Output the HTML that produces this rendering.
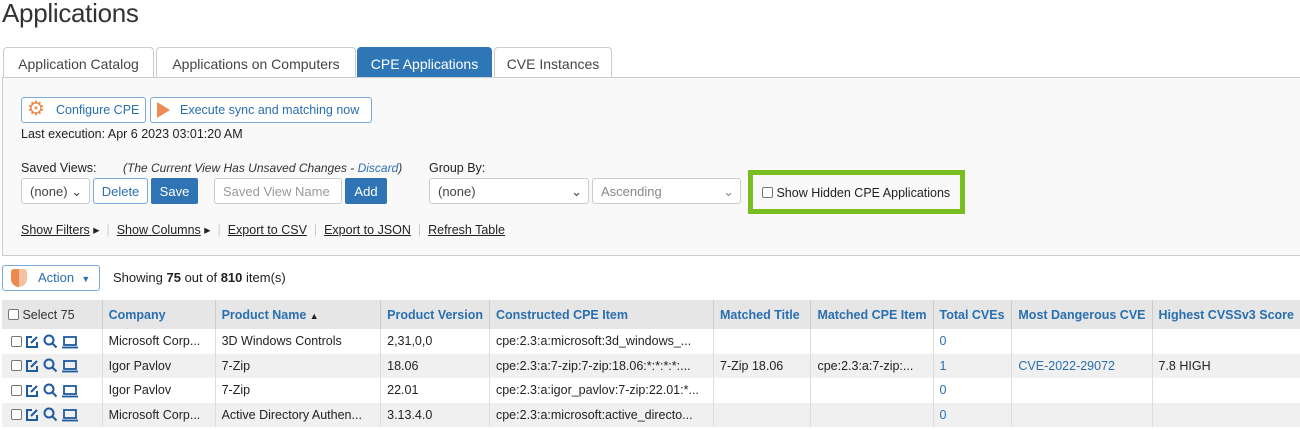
<!DOCTYPE html>
<html><head><style>
*{box-sizing:border-box}
body{margin:0;width:1300px;height:430px;overflow:hidden;background:#fff;font-family:"Liberation Sans",sans-serif;font-size:13px;color:#222;position:relative}
.a{position:absolute;white-space:nowrap}
.tab{position:absolute;top:47px;height:31px;border:1px solid #ccc;border-bottom:none;border-radius:4px 4px 0 0;background:#fff;font-size:14px;color:#444;padding-top:8px;text-align:center}
.btn{position:absolute;border:1px solid #7aa9d6;border-radius:3px;background:#fff;color:#2a6fb0;font-size:13px}
.bl{position:absolute;background:#2f74b5;color:#fff;border-radius:2px;font-size:13px;text-align:center}
.sel{position:absolute;border:1px solid #ccc;border-radius:3px;background:#fff;font-size:13px;color:#444;padding:5px 0 0 8px}
.lnk{text-decoration:underline;color:#222}
table{position:absolute;left:2px;top:300px;border-collapse:collapse;font-size:12.5px;table-layout:fixed}
td,th{height:24.5px;padding:0 6px;border-left:1px solid #ddd;white-space:nowrap;overflow:hidden;text-align:left}
th{height:29px;background:#e6e6e6;color:#2a6fb0;font-weight:bold;border-left:1px solid #ccc}
tr:nth-child(odd) td{background:#f0f0f0}
.b{color:#2a6fb0}
.cb{display:inline-block;width:11px;height:11px;border:1px solid #777;border-radius:2px;background:#fff;vertical-align:-1px}
svg{vertical-align:-3px}
</style></head><body>
<div class="a" style="left:2px;top:-2px;font-size:26px;color:#333;letter-spacing:-0.3px">Applications</div>
<div class="tab" style="left:3px;width:151px">Application Catalog</div>
<div class="tab" style="left:156px;width:200px">Applications on Computers</div>
<div class="tab" style="left:357px;width:135px;background:#2f76b7;border-color:#2f76b7;color:#fff">CPE Applications</div>
<div class="tab" style="left:494px;width:118px">CVE Instances</div>
<div class="a" style="left:2px;top:77px;width:1298px;height:179px;background:#f9f9f9;border-top:1px solid #ccc;border-left:1px solid #ccc;border-bottom:1px solid #ccc"></div>
<div class="btn" style="left:21px;top:97px;width:125px;height:26px;padding:5px 0 0 34px;font-size:12.5px">Configure CPE</div>
<div class="a" style="left:27px;top:99px;font-size:20px;color:#ec8a4e;line-height:20px">⚙</div>
<div class="btn" style="left:150px;top:97px;width:222px;height:26px;padding:5px 0 0 29px;font-size:12.5px">Execute sync and matching now</div>
<div class="a" style="left:157px;top:102px;width:0;height:0;border-left:13px solid #ef8c55;border-top:8px solid transparent;border-bottom:8px solid transparent"></div>
<div class="a" style="left:21px;top:127px;font-size:12.5px">Last execution: Apr 6 2023 03:01:20 AM</div>
<div class="a" style="left:21px;top:161px;font-size:12.5px">Saved Views:</div>
<div class="a" style="left:123px;top:161px;font-style:italic;color:#333;font-size:12px">(The Current View Has Unsaved Changes - <span class="b">Discard</span>)</div>
<div class="sel" style="left:21px;top:178px;width:69px;height:26px">(none) &#8964;</div>
<div class="btn" style="left:93px;top:178px;width:55px;height:26px;padding-top:5px;text-align:center">Delete</div>
<div class="bl" style="left:151px;top:178px;width:47px;height:26px;padding-top:6px">Save</div>
<div class="sel" style="left:214px;top:178px;width:128px;height:26px;color:#999">Saved View Name</div>
<div class="bl" style="left:345px;top:178px;width:42px;height:26px;padding-top:6px">Add</div>
<div class="a" style="left:429px;top:161px;font-size:12.5px">Group By:</div>
<div class="sel" style="left:429px;top:178px;width:160px;height:26px">(none)<span style="position:absolute;right:6px">&#8964;</span></div>
<div class="sel" style="left:592px;top:178px;width:149px;height:26px;color:#888">Ascending<span style="position:absolute;right:6px">&#8964;</span></div>
<div class="a" style="left:748px;top:170px;width:217px;height:44px;border:5px solid #78be20;padding:11px 0 0 9px;font-size:12.5px"><span class="cb"></span> Show Hidden CPE Applications</div>
<div class="a" style="left:21px;top:222px;font-size:12.5px"><span class="lnk">Show Filters</span> ▸ <span style="color:#ccc">&nbsp;|&nbsp;</span> <span class="lnk">Show Columns</span> ▸ <span style="color:#ccc">&nbsp;|&nbsp;</span> <span class="lnk">Export to CSV</span> <span style="color:#ccc">&nbsp;|&nbsp;</span> <span class="lnk">Export to JSON</span> <span style="color:#ccc">&nbsp;|&nbsp;</span> <span class="lnk">Refresh Table</span></div>
<div class="btn" style="left:2px;top:265px;width:98px;height:26px;padding:4px 0 0 35px">Action &nbsp;<span style="font-size:9px">▼</span></div>
<div class="a" style="left:11px;top:269px;width:16px;height:18px;background:linear-gradient(90deg,#ec8a4e 50%,#f6c3a0 50%);border-radius:3px 3px 8px 8px"></div>
<div class="a" style="left:113px;top:270px">Showing <b>75</b> out of <b>810</b> item(s)</div>
<table>
<colgroup><col style="width:102px"><col style="width:114px"><col style="width:167px"><col style="width:107px"><col style="width:225px"><col style="width:98px"><col style="width:122px"><col style="width:79px"><col style="width:139px"><col style="width:145px"></colgroup>
<tr><th style="color:#333;font-weight:normal;border-left:none"><span class="cb"></span> Select 75</th><th>Company</th><th>Product Name <span style="font-size:9px;color:#222">▲</span></th><th>Product Version</th><th>Constructed CPE Item</th><th>Matched Title</th><th>Matched CPE Item</th><th>Total CVEs</th><th>Most Dangerous CVE</th><th>Highest CVSSv3 Score</th></tr>
<tr><td style="border:none;padding-left:9px"><span class="cb"></span> <svg width="14" height="14" viewBox="0 0 14 14" fill="none" stroke="#1f5a9e" stroke-width="2"><path d="M7 2H2v10h10V7"/><path d="M6 8l6-6"/></svg> <svg width="15" height="15" viewBox="0 0 15 15" fill="none" stroke="#1f5a9e" stroke-width="2"><circle cx="6" cy="6" r="4.5"/><path d="M9.5 9.5l4 4"/></svg> <svg width="18" height="14" viewBox="0 0 18 14" fill="none" stroke="#1f5a9e" stroke-width="1.8"><rect x="3" y="2" width="12" height="8"/><path d="M1 12.5h16"/></svg></td><td>Microsoft Corp...</td><td>3D Windows Controls</td><td>2,31,0,0</td><td>cpe:2.3:a:microsoft:3d_windows_...</td><td></td><td></td><td class="b">0</td><td></td><td></td></tr>
<tr><td style="border:none;padding-left:9px"><span class="cb"></span> <svg width="14" height="14" viewBox="0 0 14 14" fill="none" stroke="#1f5a9e" stroke-width="2"><path d="M7 2H2v10h10V7"/><path d="M6 8l6-6"/></svg> <svg width="15" height="15" viewBox="0 0 15 15" fill="none" stroke="#1f5a9e" stroke-width="2"><circle cx="6" cy="6" r="4.5"/><path d="M9.5 9.5l4 4"/></svg> <svg width="18" height="14" viewBox="0 0 18 14" fill="none" stroke="#1f5a9e" stroke-width="1.8"><rect x="3" y="2" width="12" height="8"/><path d="M1 12.5h16"/></svg></td><td>Igor Pavlov</td><td>7-Zip</td><td>18.06</td><td>cpe:2.3:a:7-zip:7-zip:18.06:*:*:*:*:...</td><td>7-Zip 18.06</td><td>cpe:2.3:a:7-zip:...</td><td class="b">1</td><td class="b">CVE-2022-29072</td><td>7.8 HIGH</td></tr>
<tr><td style="border:none;padding-left:9px"><span class="cb"></span> <svg width="14" height="14" viewBox="0 0 14 14" fill="none" stroke="#1f5a9e" stroke-width="2"><path d="M7 2H2v10h10V7"/><path d="M6 8l6-6"/></svg> <svg width="15" height="15" viewBox="0 0 15 15" fill="none" stroke="#1f5a9e" stroke-width="2"><circle cx="6" cy="6" r="4.5"/><path d="M9.5 9.5l4 4"/></svg> <svg width="18" height="14" viewBox="0 0 18 14" fill="none" stroke="#1f5a9e" stroke-width="1.8"><rect x="3" y="2" width="12" height="8"/><path d="M1 12.5h16"/></svg></td><td>Igor Pavlov</td><td>7-Zip</td><td>22.01</td><td>cpe:2.3:a:igor_pavlov:7-zip:22.01:*...</td><td></td><td></td><td class="b">0</td><td></td><td></td></tr>
<tr><td style="border:none;padding-left:9px"><span class="cb"></span> <svg width="14" height="14" viewBox="0 0 14 14" fill="none" stroke="#1f5a9e" stroke-width="2"><path d="M7 2H2v10h10V7"/><path d="M6 8l6-6"/></svg> <svg width="15" height="15" viewBox="0 0 15 15" fill="none" stroke="#1f5a9e" stroke-width="2"><circle cx="6" cy="6" r="4.5"/><path d="M9.5 9.5l4 4"/></svg> <svg width="18" height="14" viewBox="0 0 18 14" fill="none" stroke="#1f5a9e" stroke-width="1.8"><rect x="3" y="2" width="12" height="8"/><path d="M1 12.5h16"/></svg></td><td>Microsoft Corp...</td><td>Active Directory Authen...</td><td>3.13.4.0</td><td>cpe:2.3:a:microsoft:active_directo...</td><td></td><td></td><td class="b">0</td><td></td><td></td></tr>
</table>
</body></html>
